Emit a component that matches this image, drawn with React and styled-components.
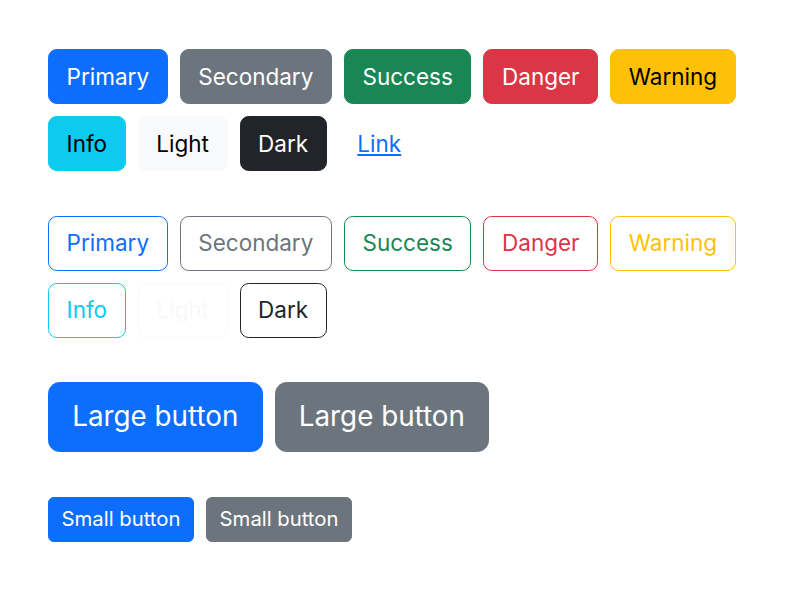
import styled, { createGlobalStyle, css } from 'styled-components';

const GlobalStyle = createGlobalStyle`
	body {
		margin: 0;
		background: #fff;
		font-family: Inter, 'Noto Sans', sans-serif;
	}
`;

const colors = {
	primary: { bg: '#0d6efd', fg: '#fff' },
	secondary: { bg: '#6c757d', fg: '#fff' },
	success: { bg: '#198754', fg: '#fff' },
	danger: { bg: '#dc3545', fg: '#fff' },
	warning: { bg: '#ffc107', fg: '#000' },
	info: { bg: '#0dcaf0', fg: '#000' },
	light: { bg: '#f8f9fa', fg: '#000' },
	dark: { bg: '#212529', fg: '#fff' },
};

const sizes = {
	sm: css`
		height: 45px;
		font-size: 20.3px;
		padding: 0 12.6px;
		border-radius: 5.8px;
	`,
	md: css`
		height: 55px;
		font-size: 22.5px;
		padding: 0 17.6px;
		border-radius: 8.7px;
	`,
	lg: css`
		height: 70px;
		font-size: 27.8px;
		padding: 0 23.2px;
		border-radius: 11.6px;
	`,
};

const Page = styled.div`
	display: flex;
	flex-direction: column;
	gap: 44.5px;
	padding: 49px 0 0 48px;
`;

const Section = styled.div`
	display: flex;
	flex-direction: column;
	gap: 12px;
`;

const Row = styled.div`
	display: flex;
	gap: 12px;
	align-items: flex-start;
`;

const Btn = styled.button`
	display: inline-flex;
	align-items: center;
	justify-content: center;
	box-sizing: border-box;
	font-family: inherit;
	font-weight: 400;
	line-height: 1.5;
	border: 1.5px solid transparent;
	cursor: pointer;
	white-space: nowrap;
	${({ $size }) => sizes[$size || 'md']}
	${({ $variant, $outline }) => {
		const c = colors[$variant];
		if (!c) return '';
		return $outline
			? css`
					background: transparent;
					color: ${c.bg};
					border-color: ${c.bg};
				`
			: css`
					background: ${c.bg};
					color: ${c.fg};
					border-color: ${c.bg};
				`;
	}}
`;

const LinkBtn = styled(Btn)`
	background: transparent;
	color: #0d6efd;
	text-decoration: underline;
`;

const variants = ['primary', 'secondary', 'success', 'danger', 'warning'];
const variants2 = ['info', 'light', 'dark'];
const label = (v) => v[0].toUpperCase() + v.slice(1);

export default function App() {
	return (
		<>
			<GlobalStyle />
			<Page>
				<Section>
					<Row>
						{variants.map((v) => (
							<Btn key={v} $variant={v}>{label(v)}</Btn>
						))}
					</Row>
					<Row>
						{variants2.map((v) => (
							<Btn key={v} $variant={v}>{label(v)}</Btn>
						))}
						<LinkBtn>Link</LinkBtn>
					</Row>
				</Section>
				<Section>
					<Row>
						{variants.map((v) => (
							<Btn key={v} $variant={v} $outline>{label(v)}</Btn>
						))}
					</Row>
					<Row>
						{variants2.map((v) => (
							<Btn key={v} $variant={v} $outline>{label(v)}</Btn>
						))}
					</Row>
				</Section>
				<Section>
					<Row>
						<Btn $variant="primary" $size="lg">Large button</Btn>
						<Btn $variant="secondary" $size="lg">Large button</Btn>
					</Row>
				</Section>
				<Section>
					<Row>
						<Btn $variant="primary" $size="sm">Small button</Btn>
						<Btn $variant="secondary" $size="sm">Small button</Btn>
					</Row>
				</Section>
			</Page>
		</>
	);
}
